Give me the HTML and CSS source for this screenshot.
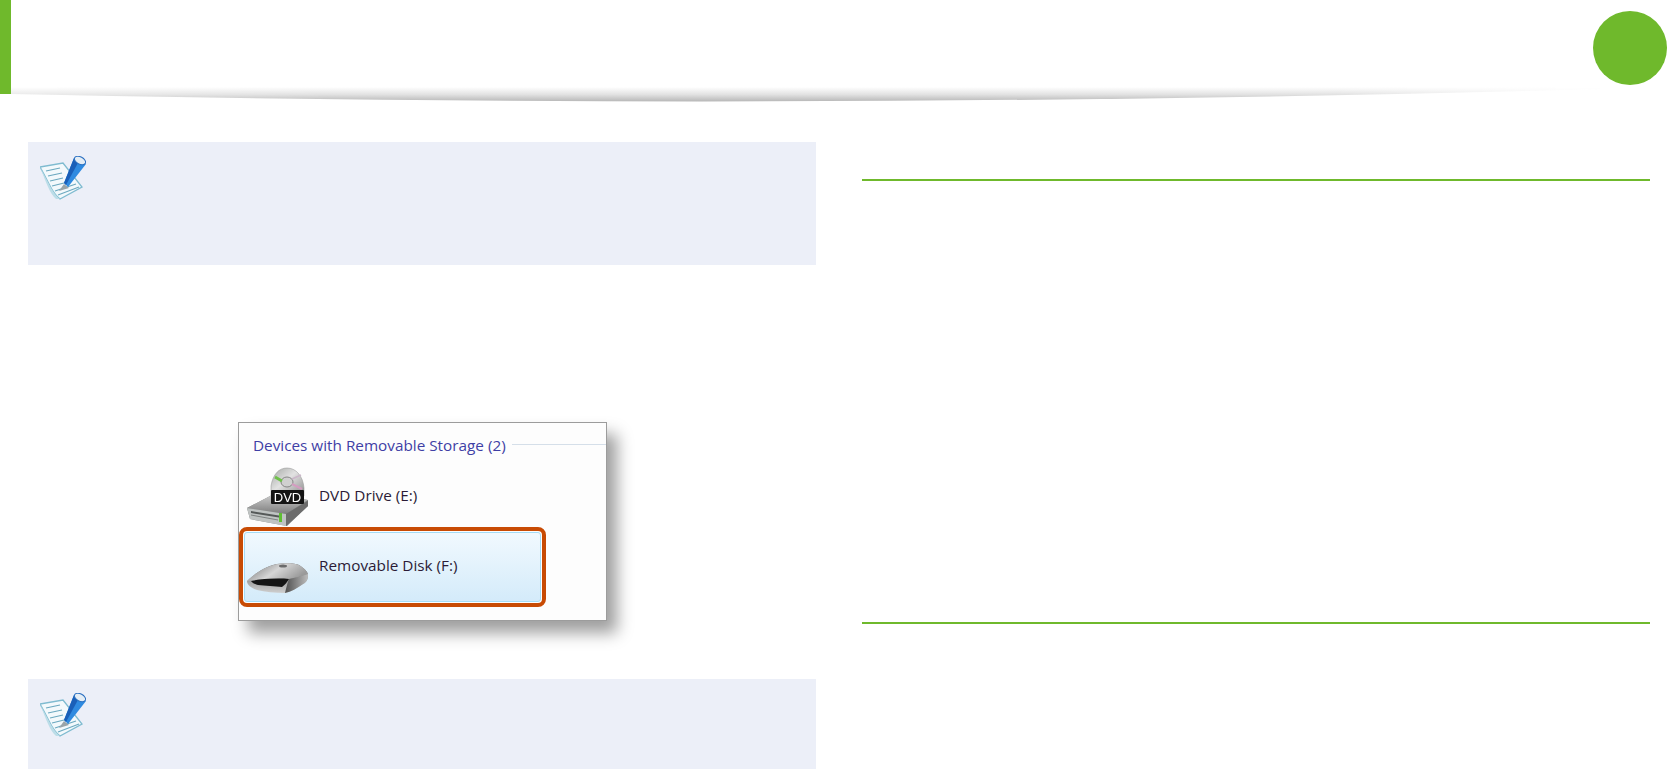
FILE: index.html
```html
<!DOCTYPE html>
<html lang="en">
<head>
    <meta charset="UTF-8">
    <title>Devices with Removable Storage</title>
    <link rel="stylesheet" href="styles.css">
</head>
<body>
    <header class="page-head">
        <div class="head-mark"></div>
        <div class="head-badge"></div>
        <svg class="head-shadow" viewBox="0 0 1667 16" preserveAspectRatio="none">
            <defs>
                <linearGradient id="shade" gradientUnits="userSpaceOnUse" x1="0" y1="0" x2="0" y2="15">
                    <stop offset="0" stop-color="#fff"/>
                    <stop offset="0.5" stop-color="#e2e2e2"/>
                    <stop offset="1" stop-color="#b4b4b4"/>
                </linearGradient>
                <linearGradient id="fade" x1="0" y1="0" x2="1" y2="0">
                    <stop offset="0" stop-color="#fff" stop-opacity="0.7"/>
                    <stop offset="0.2" stop-color="#fff" stop-opacity="1"/>
                    <stop offset="0.8" stop-color="#fff" stop-opacity="1"/>
                    <stop offset="0.96" stop-color="#fff" stop-opacity="0.1"/>
                </linearGradient>
                <mask id="fade-mask">
                    <rect width="1667" height="16" fill="url(#fade)"/>
                </mask>
            </defs>
            <path d="M11 0 H1600 V2 Q800 24 11 7 Z" fill="url(#shade)" mask="url(#fade-mask)"/>
        </svg>
    </header>

    <main class="columns">
        <section class="col">
            <div class="note">
                <svg class="note-icon" viewBox="0 0 46 44"><use href="#pencil-note"/></svg>
            </div>

            <figure class="shot">
                <div class="group-title">
                    <span>Devices with Removable Storage (2)</span>
                    <i class="group-line"></i>
                </div>

                <div class="drive">
                    <svg class="drive-icon dvd" viewBox="0 0 70 70">
                        <defs>
                            <linearGradient id="disc" x1="0" y1="0" x2="1" y2="1">
                                <stop offset="0" stop-color="#a3a6a3"/>
                                <stop offset="0.45" stop-color="#e2e2e2"/>
                                <stop offset="1" stop-color="#8a8a8a"/>
                            </linearGradient>
                            <linearGradient id="case" x1="0" y1="0" x2="0" y2="1">
                                <stop offset="0" stop-color="#cfcfcf"/>
                                <stop offset="1" stop-color="#7d7d7d"/>
                            </linearGradient>
                        </defs>
                        <path d="M7 48 L34 34 L68 40 L68 46 L47 66 L10 59 Z" fill="#7b7f7e"/>
                        <path d="M7 48 L34 34 L68 40 L46 54 Z" fill="url(#case)"/>
                        <path d="M7 48 L46 54 L46 66 L10 59 Z" fill="#bfc3c2"/>
                        <path d="M11 51 L42 56 L42 58 L11 53 Z" fill="#555958"/>
                        <path d="M11 55 L38 60" stroke="#7e8281" fill="none"/>
                        <rect x="39" y="53" width="3" height="9" fill="#5fbf33"/>
                        <path d="M46 54 L68 41 L68 46 L46 66 Z" fill="#6c6c6c"/>
                        <path d="M31 36 V26 C33 14 39 8 47 8 C56 8 63 16 64 28 V36 Z" fill="url(#disc)" stroke="#8e8e8e" stroke-width="0.5"/>
                        <ellipse cx="47" cy="22" rx="6" ry="5" fill="#d0d0d0" stroke="#858585"/>
                        <path d="M35 17 L42 21" stroke="#6fc04a" stroke-width="3"/>
                        <path d="M52 24 L62 29" stroke="#d49cc0" stroke-width="2"/>
                        <path d="M52 19 L61 15" stroke="#cbb7c9" stroke-width="1.5"/>
                        <rect x="31" y="30" width="33" height="14" rx="1" fill="#141414"/>
                        <text class="dvd-label" x="47.5" y="41.5" text-anchor="middle">DVD</text>
                    </svg>
                    <span class="drive-name name-dvd">DVD Drive (E:)</span>
                </div>

                <div class="mark">
                    <div class="drive selected">
                        <svg class="drive-icon flash" viewBox="0 0 70 40">
                            <defs>
                                <linearGradient id="flash-top" x1="0" y1="0" x2="1" y2="0.4">
                                    <stop offset="0" stop-color="#6e6e6e"/>
                                    <stop offset="0.55" stop-color="#d6d6d6"/>
                                    <stop offset="1" stop-color="#9a9a9a"/>
                                </linearGradient>
                                <linearGradient id="flash-front" x1="0" y1="0" x2="0" y2="1">
                                    <stop offset="0" stop-color="#5c5c5c"/>
                                    <stop offset="1" stop-color="#cfcfcf"/>
                                </linearGradient>
                                <linearGradient id="flash-side" x1="0" y1="0" x2="1" y2="0">
                                    <stop offset="0" stop-color="#4e4e4e"/>
                                    <stop offset="1" stop-color="#bdbdbd"/>
                                </linearGradient>
                            </defs>
                            <path d="M2 21 C10 13 22 6 32 4 C40 3 50 3 54 5 C59 8 63 12 63 15 C63 19 62 22 58 24 C52 28 46 32 40 33 C30 33 20 32 12 30 C6 28 2 25 2 21 Z" fill="url(#flash-front)"/>
                            <path d="M2 21 C10 13 22 6 32 4 C40 3 50 3 54 5 C59 8 62 11 63 14 C56 16 50 18 44 19 C30 18 14 19 2 21 Z" fill="url(#flash-top)"/>
                            <path d="M44 19 C50 18 56 16 63 14 C63 19 62 22 58 24 C52 28 46 32 40 33 C41 29 42 24 44 19 Z" fill="url(#flash-side)"/>
                            <path d="M6 21 C16 19 32 18 44 19 C42 22 40 25 37 27 C30 26 20 26 13 25 C10 24 7 23 6 21 Z" fill="#151515"/>
                            <ellipse cx="38" cy="6" rx="4" ry="1.5" fill="#6b6b6b"/>
                        </svg>
                        <span class="drive-name name-flash">Removable Disk (F:)</span>
                    </div>
                </div>
            </figure>

            <div class="note note-low">
                <svg class="note-icon" viewBox="0 0 46 44"><use href="#pencil-note"/></svg>
            </div>
        </section>

        <section class="col">
            <div class="rule"></div>
            <div class="rule rule-low"></div>
        </section>
    </main>

    <svg class="defs" width="0" height="0">
        <symbol id="pencil-note" viewBox="0 0 46 44">
            <path d="M0 11 L23 7 L42 31 L20 43 C16 40 12 34 9 28 C6 22 3 16 0 11 Z" fill="#f3f9fc" stroke="#7fbbd0" stroke-width="1.3"/>
            <path d="M9 28 C12 34 16 40 20 43 L16 43 C10 38 6 26 0 11 Z" fill="#bcdde8"/>
            <g stroke="#6ba8bf" stroke-width="1.1" fill="none">
                <path d="M6 15 L20 12"/>
                <path d="M8 20 L22 17"/>
                <path d="M10 25 L23 22"/>
                <path d="M12 30 L24 27"/>
                <path d="M15 35 L36 28"/>
                <path d="M18 39 L39 31"/>
            </g>
            <path d="M24 27 L34 2 L46 8 L28 31 Z" fill="#2f8ae0"/>
            <path d="M24 27 L34 2 L39 5 L26 29 Z" fill="#1a5fb8"/>
            <ellipse cx="40" cy="4.5" rx="6" ry="3.6" transform="rotate(27 40 4.5)" fill="#e4edf5" stroke="#2a6fc0"/>
            <path d="M24 28 L19 35 L29 32 Z" fill="#9aa4a8"/>
        </symbol>
    </svg>
</body>
</html>
```

FILE: styles.css
```css
body {
    margin: 0;
    background-color: #fff;
    font-family: "Open Sans", sans-serif;
    overflow: hidden;
}

.page-head {
    position: relative;
    display: flex;
    justify-content: space-between;
    height: 94px;
}

.head-mark {
    width: 11px;
    background-color: #6fb92c;
}

.head-badge {
    width: 74px;
    height: 74px;
    margin-top: 11px;
    border-radius: 50%;
    background-color: #6fb92c;
}

.head-shadow {
    position: absolute;
    left: 0;
    top: 87px;
    width: 1667px;
    height: 16px;
}

.columns {
    display: grid;
    grid-template-columns: 788px 788px;
    gap: 46px;
    padding: 48px 0 0 28px;
}

.note {
    height: 123px;
    background-color: #eceff8;
    padding: 14px 0 0 12px;
    box-sizing: border-box;
}

.note-low {
    height: 90px;
}

.note-icon {
    display: block;
    width: 46px;
    height: 44px;
    filter: blur(0.4px);
}

.shot {
    width: 367px;
    height: 197px;
    margin: 157px 0 58px 210px;
    border: 1px solid #9c9c9c;
    background-color: #fdfdfd;
    box-shadow: 10px 12px 15px rgba(0, 0, 0, 0.38);
}

.group-title {
    display: flex;
    align-items: center;
    gap: 6px;
    height: 44px;
    margin-bottom: -2px;
    padding-left: 14px;
    font-size: 15.3px;
    color: #3f3fa5;
}

.group-line {
    flex: 1;
    height: 1px;
    margin-top: -2px;
    background-color: #d5dfe9;
}

.drive {
    display: flex;
    align-items: center;
    height: 62px;
    color: #2b1b36;
    font-size: 15.3px;
}

.drive-icon {
    display: block;
    width: 70px;
    margin-left: 1px;
    filter: blur(0.4px);
}

.dvd {
    height: 70px;
    margin-top: -2px;
}

.drive-name {
    margin-left: 9px;
}

.name-dvd {
    margin-top: -2px;
}

.dvd-label {
    font-family: "Liberation Sans", sans-serif;
    font-size: 13px;
    fill: #fff;
}

.mark {
    width: 297px;
    height: 70px;
    border: 4px solid #c84b04;
    border-radius: 8px;
    padding: 1px;
}

.selected {
    height: 70px;
    border: 1px solid #a5dcf6;
    border-radius: 3px;
    box-sizing: border-box;
    background: linear-gradient(#f1f9fe, #d4ebfa);
}

.flash {
    height: 40px;
    margin-left: 0;
    margin-top: 26px;
    filter: blur(0.6px);
}

.name-flash {
    margin-left: 4px;
    margin-top: -4px;
}

.rule {
    height: 2px;
    margin-top: 37px;
    background-color: #6fb92c;
}

.rule-low {
    margin-top: 441px;
}

.defs {
    position: absolute;
}
```
